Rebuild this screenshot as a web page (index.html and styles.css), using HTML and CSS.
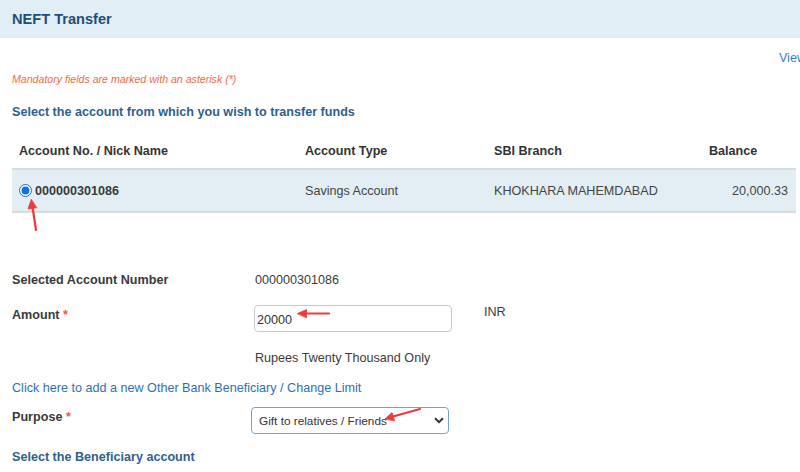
FILE: index.html
```html
<!DOCTYPE html>
<html>
<head>
<meta charset="utf-8">
<link rel="stylesheet" href="styles.css">
</head>
<body>
<div class="page">
  <div class="header">NEFT Transfer</div>
  <div class="content">
    <div class="view-row"><a class="view-link">View</a></div>
    <div class="mandatory">Mandatory fields are marked with an asterisk (*)</div>
    <div class="section-title">Select the account from which you wish to transfer funds</div>
    <div class="acct-table">
      <div class="acct-head">
        <div class="c1">Account No. / Nick Name</div>
        <div class="c2">Account Type</div>
        <div class="c3">SBI Branch</div>
        <div class="c4">Balance</div>
      </div>
      <div class="acct-row">
        <div class="c1 acct-no"><input type="radio" class="radio" checked> 000000301086</div>
        <div class="c2">Savings Account</div>
        <div class="c3">KHOKHARA MAHEMDABAD</div>
        <div class="c4 bal">20,000.33</div>
      </div>
    </div>
    <div class="form-row selected">
      <div class="label">Selected Account Number</div>
      <div class="value">000000301086</div>
    </div>
    <div class="form-row amount">
      <div class="label">Amount <span class="req">*</span></div>
      <div class="input-box">20000</div>
      <div class="unit">INR</div>
    </div>
    <div class="form-row words">
      <div class="label"></div>
      <div class="value">Rupees Twenty Thousand Only</div>
    </div>
    <div class="add-link"><a>Click here to add a new Other Bank Beneficiary / Change Limit</a></div>
    <div class="form-row purpose">
      <div class="label">Purpose <span class="req">*</span></div>
      <div class="select-box"><span>Gift to relatives / Friends</span>
        <svg class="chev" width="10" height="7" viewBox="0 0 10 7"><path d="M1 1.2 L5 5.2 L9 1.2" fill="none" stroke="#333" stroke-width="2"/></svg>
      </div>
    </div>
    <div class="section-title bene">Select the Beneficiary account</div>
  </div>
  <svg class="annot" width="800" height="472" viewBox="0 0 800 472">
    <g stroke="#ec3b3b" stroke-width="2.2" stroke-linecap="round" fill="#ec3b3b">
      <line x1="36" y1="230" x2="32.5" y2="207"/>
      <path d="M31.2 199.5 L28 209 L36.5 207.8 Z" stroke-width="0.8"/>
      <line x1="329" y1="313.5" x2="306" y2="313.5"/>
      <path d="M297.5 313.5 L306.5 309.5 L306.5 317.5 Z" stroke-width="0.8"/>
      <line x1="420" y1="409" x2="393" y2="416.5"/>
      <path d="M385 419 L392 412.5 L394.5 420.5 Z" stroke-width="0.8"/>
    </g>
  </svg>
</div>
</body>
</html>
```

FILE: styles.css
```css
html, body {
  margin: 0;
  padding: 0;
  background: #fff;
  overflow: hidden;
}
body {
  font-family: "Liberation Sans", Arial, sans-serif;
  font-size: 12.6px;
  color: #3b3b3b;
}
.page {
  position: relative;
  width: 800px;
  height: 472px;
  overflow: hidden;
}
.header {
  height: 38px;
  line-height: 38px;
  background: #e1eef5;
  padding-left: 12px;
  font-size: 14.6px;
  font-weight: bold;
  color: #1f4e79;
}
.content {
  padding: 0 4px 0 12px;
}
.view-row {
  display: flex;
  justify-content: flex-end;
  margin-top: 10px;
  height: 20px;
  line-height: 20px;
  margin-right: -10px;
}
.view-link {
  color: #3d7cc9;
  font-size: 12.6px;
}
.mandatory {
  margin-top: 4px;
  height: 14px;
  line-height: 14px;
  font-size: 10.6px;
  font-style: italic;
  color: #f26a44;
}
.section-title {
  margin-top: 16px;
  height: 20px;
  line-height: 20px;
  font-weight: bold;
  color: #2f5f8e;
}
.acct-table {
  margin-top: 12px;
}
.acct-head, .acct-row {
  display: grid;
  grid-template-columns: 286px 189px 215px 94px;
  align-items: center;
}
.acct-head {
  height: 34px;
  font-weight: bold;
  color: #333;
}
.acct-head > div, .acct-row > div {
  padding-left: 7px;
}
.acct-row {
  height: 41px;
  background: #e2eef3;
  border-top: 2px solid #d9dcdd;
  border-bottom: 2px solid #d9dcdd;
  color: #444;
}
.acct-no {
  display: flex;
  align-items: center;
  font-weight: bold;
  color: #3a3a3a;
}
.radio {
  margin: 0 3px 0 0;
  width: 13px;
  height: 13px;
  accent-color: #0a74e8;
}
.acct-row > .bal {
  text-align: right;
  padding-left: 0;
  padding-right: 8px;
}
.form-row {
  display: flex;
  align-items: center;
}
.form-row .label {
  width: 243px;
  flex: none;
  font-weight: bold;
  color: #3a3a3a;
}
.req {
  color: #f0573a;
}
.selected {
  margin-top: 57px;
  height: 20px;
}
.amount {
  margin-top: 15px;
  align-items: flex-start;
  height: 27px;
}
.amount .label {
  padding-top: 3px;
}
.input-box {
  box-sizing: border-box;
  width: 198px;
  height: 27px;
  margin-left: -1px;
  border: 1px solid #c9c9c9;
  border-radius: 4px;
  padding: 2px 4px 0 2px;
  line-height: 25px;
  color: #333;
}
.unit {
  margin-left: 32px;
  line-height: 14px;
}
.words {
  margin-top: 16px;
  height: 20px;
}
.add-link {
  margin-top: 10px;
  height: 20px;
  line-height: 20px;
}
.add-link a {
  color: #2f6fb2;
}
.purpose {
  margin-top: 9px;
  align-items: flex-start;
  height: 27px;
}
.purpose .label {
  padding-top: 3px;
}
.select-box {
  box-sizing: border-box;
  width: 198px;
  height: 27px;
  margin-left: -4px;
  border: 1px solid #6aa6dc;
  border-radius: 4px;
  display: flex;
  align-items: center;
  justify-content: space-between;
  padding: 0 4px 0 7px;
  color: #333;
  font-size: 11.8px;
}
.chev {
  display: block;
}
.bene {
  margin-top: 13px;
}
.annot {
  position: absolute;
  left: 0;
  top: 0;
  pointer-events: none;
}
```
